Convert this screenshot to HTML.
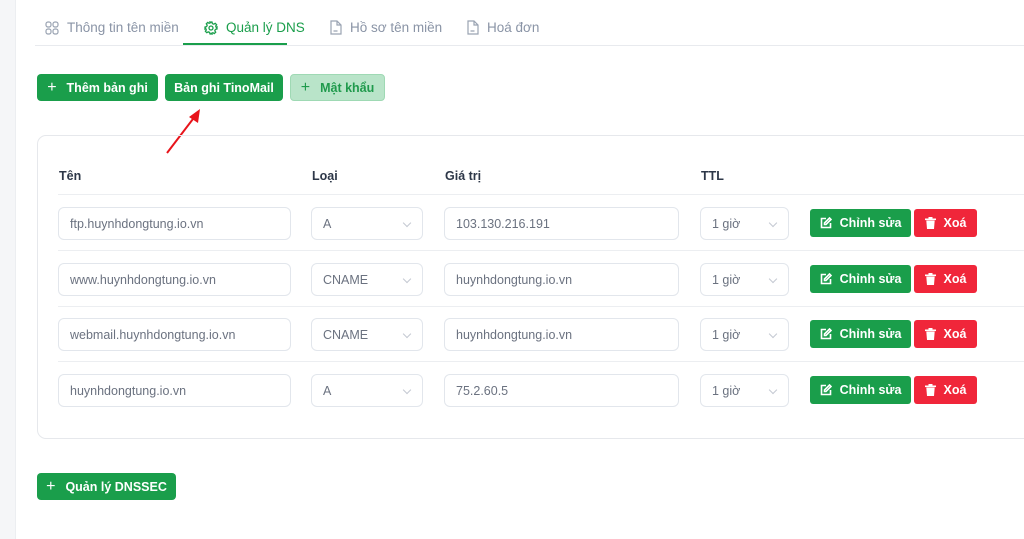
<!DOCTYPE html>
<html><head><meta charset="utf-8"><style>
*{box-sizing:border-box;margin:0;padding:0}
body{width:1024px;height:539px;overflow:hidden;background:#fff;font-family:"Liberation Sans",sans-serif;position:relative;color:#1f2937}
.side{position:absolute;left:0;top:0;width:16px;height:539px;background:#f5f6f8;border-right:1px solid #eceef1}
.tabs{position:absolute;left:35px;top:0;right:0;height:46px;border-bottom:1px solid #e8eaee}
.tab{position:absolute;top:20px;font-size:13.5px;color:#8a94a6;display:flex;align-items:center;gap:8px}
.tab.act{color:#1a9e4b}
.uline{position:absolute;left:183px;top:43px;width:104px;height:2px;background:#1a9e4b}
.btn{position:absolute;height:27px;border-radius:4px;background:#1a9e4b;color:#fff;font-size:12.5px;font-weight:bold;display:flex;align-items:center;justify-content:center;gap:10px}
.card{position:absolute;left:37px;top:135px;width:1000px;height:304px;border:1px solid #e6e8ec;border-radius:9px}
.th{position:absolute;top:169px;font-size:12.5px;font-weight:bold;color:#2d3748}
.hl{position:absolute;left:58px;width:966px;height:1px;background:#eceef1}
.inp{position:absolute;height:33px;border:1px solid #e2e6ec;border-radius:6px;font-size:12.5px;color:#6b7280;padding-left:11px;display:flex;align-items:center}
.chev{position:absolute;right:12px;top:12px;width:6px;height:6px;border-right:1px solid #c4c9d2;border-bottom:1px solid #c4c9d2;transform:rotate(45deg)}
.eb{position:absolute;height:28px;border-radius:3px;color:#fff;font-size:12.5px;font-weight:bold;display:flex;align-items:center;justify-content:center;gap:8px}
</style></head><body>
<div class="side"></div>
<div class="tabs"></div>
<div class="tab" style="left:45px"><svg width="14" height="14" viewBox="0 0 14 14" fill="none" stroke="#9aa3b2" stroke-width="1.2"><rect x="1" y="1" width="5" height="5" rx="2"/><rect x="8" y="1" width="5" height="5" rx="2"/><rect x="1" y="8" width="5" height="5" rx="2"/><rect x="8" y="8" width="5" height="5" rx="2"/></svg>Thông tin tên miền</div>
<div class="tab act" style="left:204px"><svg width="14" height="14" viewBox="0 0 14 14" fill="none" stroke="#1a9e4b" stroke-width="1.3"><circle cx="7" cy="7" r="2"/><path d="M6 1h2l.4 1.6 1.4.6 1.4-.9 1.4 1.4-.9 1.4.6 1.4L13 6v2l-1.6.4-.6 1.4.9 1.4-1.4 1.4-1.4-.9-1.4.6L8 13H6l-.4-1.6-1.4-.6-1.4.9-1.4-1.4.9-1.4-.6-1.4L1 8V6l1.6-.4.6-1.4-.9-1.4 1.4-1.4 1.4.9 1.4-.6z"/></svg>Quản lý DNS</div>
<div class="uline"></div>
<div class="tab" style="left:330px"><svg width="12" height="15" viewBox="0 0 12 15" fill="none" stroke="#9aa3b2" stroke-width="1.2"><path d="M1 1h6l4 4v9H1z M7 1v4h4 M3.5 11h4"/></svg>Hồ sơ tên miền</div>
<div class="tab" style="left:467px"><svg width="12" height="15" viewBox="0 0 12 15" fill="none" stroke="#9aa3b2" stroke-width="1.2"><path d="M1 1h6l4 4v9H1z M7 1v4h4 M3.5 11h4"/></svg>Hoá đơn</div>

<div class="btn" style="left:37px;top:74px;width:121px"><span style="font-size:16px;font-weight:normal">+</span>Thêm bản ghi</div>
<div class="btn" style="left:165px;top:74px;width:118px">Bản ghi TinoMail</div>
<div class="btn" style="left:290px;top:74px;width:95px;background:#b9e4c9;color:#1f9a4c;border:1px solid #9fd9b4"><span style="font-size:16px;font-weight:normal">+</span>Mật khẩu</div>

<svg style="position:absolute;left:160px;top:105px" width="50" height="52"><line x1="7" y1="48" x2="36" y2="10" stroke="#e8141b" stroke-width="2"/><polygon points="40,4 29,12 38,18" fill="#e8141b"/></svg>

<div class="card"></div>
<div class="th" style="left:59px">Tên</div>
<div class="th" style="left:312px">Loại</div>
<div class="th" style="left:445px">Giá trị</div>
<div class="th" style="left:701px">TTL</div>
<div class="hl" style="top:194px"></div>
<div class="hl" style="top:250px"></div>
<div class="hl" style="top:306px"></div>
<div class="hl" style="top:361px"></div>

<div id="rows"></div>
<script>
var d=[["ftp.huynhdongtung.io.vn","A","103.130.216.191"],["www.huynhdongtung.io.vn","CNAME","huynhdongtung.io.vn"],["webmail.huynhdongtung.io.vn","CNAME","huynhdongtung.io.vn"],["huynhdongtung.io.vn","A","75.2.60.5"]];
var h="";
d.forEach(function(r,i){var y=Math.round(207+i*55.5);
h+='<div class="inp" style="left:58px;top:'+y+'px;width:233px">'+r[0]+'</div>';
h+='<div class="inp" style="left:311px;top:'+y+'px;width:112px">'+r[1]+'<span class="chev"></span></div>';
h+='<div class="inp" style="left:444px;top:'+y+'px;width:235px">'+r[2]+'</div>';
h+='<div class="inp" style="left:700px;top:'+y+'px;width:89px">1 giờ<span class="chev"></span></div>';
h+='<div class="eb" style="left:810px;top:'+(y+2)+'px;width:101px;background:#1a9e4b"><svg width="12" height="12" viewBox="0 0 12 12" fill="none" stroke="#fff" stroke-width="1.6"><path d="M6 1.5H1.5v9h9V6"/><path d="M9.5 1 11 2.5 6 7.5H4.5V6z"/></svg>Chỉnh sửa</div>';
h+='<div class="eb" style="left:914px;top:'+(y+2)+'px;width:63px;background:#f0263a"><svg width="11" height="12" viewBox="0 0 11 12" fill="#fff"><rect x="0" y="1.5" width="11" height="1.6"/><rect x="3.5" y="0" width="4" height="2"/><path d="M1.3 3.5h8.4l-.7 8.5H2z"/></svg>Xoá</div>';
});
document.getElementById("rows").innerHTML=h;
</script>

<div class="btn" style="left:37px;top:473px;width:139px"><span style="font-size:16px;font-weight:normal">+</span>Quản lý DNSSEC</div>
</body></html>
